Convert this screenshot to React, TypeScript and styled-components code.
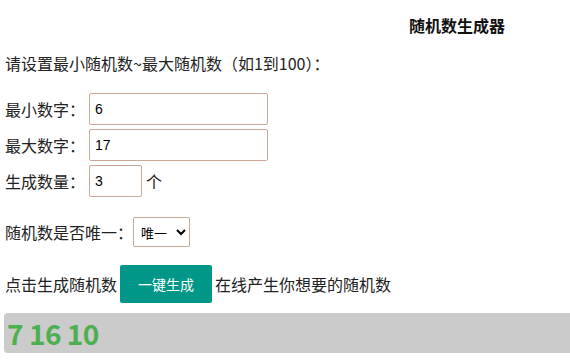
import styled, { createGlobalStyle } from "styled-components";

const GlobalStyle = createGlobalStyle`
  html, body {
    margin: 0;
    padding: 0;
    background: #fff;
  }
  body {
    font-family: "Noto Sans CJK SC", "Noto Sans", sans-serif;
    color: #222;
  }
`;

const Viewport = styled.div`
  width: 100%;
  overflow: hidden;
`;

const Page = styled.div`
  width: 914px;
  padding: 0 4px;
  box-sizing: border-box;
  font-size: 16px;
`;

const Title = styled.h3`
  margin: 0;
  padding-top: 14px;
  height: 22px;
  line-height: 22px;
  text-align: center;
  font-size: 16px;
  font-weight: bold;
  color: #111;
`;

const Intro = styled.p`
  margin: 15px 0 0;
  padding-left: 1px;
  line-height: 24px;
`;

const Fields = styled.div`
  display: flex;
  flex-direction: column;
  gap: 4px;
  margin-top: 18px;
`;

const Row = styled.div<{ $gap?: number; $top?: number }>`
  display: flex;
  align-items: center;
  gap: ${(p) => p.$gap ?? 4}px;
  margin-top: ${(p) => p.$top ?? 0}px;
  padding-left: 1px;
  line-height: 24px;
`;

const Label = styled.span`
  white-space: nowrap;
`;

const Input = styled.input<{ $w: number }>`
  width: ${(p) => p.$w}px;
  height: 32px;
  box-sizing: border-box;
  border: 1px solid #cba797;
  border-radius: 2px;
  padding: 0 5px;
  font-family: "Liberation Sans", Arial, sans-serif;
  font-size: 14px;
  color: #000;
  outline: none;
`;

const Select = styled.select`
  width: 57px;
  height: 30px;
  box-sizing: border-box;
  border: 1px solid #cba797;
  border-radius: 2px;
  padding: 0 0 0 3px;
  background: #fff;
  font-family: "Noto Sans CJK SC", sans-serif;
  font-size: 13px;
  color: #000;
`;

const Button = styled.button`
  height: 38px;
  padding: 0 18px;
  border: none;
  border-radius: 2px;
  background: #009688;
  color: #fff;
  font-family: "Noto Sans CJK SC", sans-serif;
  font-size: 14px;
  cursor: pointer;
`;

const Result = styled.div`
  margin-top: 10px;
  height: 40px;
  display: flex;
  align-items: center;
  padding-left: 3px;
  background: #cbcbcb;
  border-radius: 4px;
  font-size: 28px;
  font-weight: bold;
  color: #4caf50;
  letter-spacing: -0.5px;
`;

export default function App() {
  return (
    <Viewport>
      <GlobalStyle />
      <Page>
        <Title>随机数生成器</Title>
        <Intro>请设置最小随机数~最大随机数（如1到100）：</Intro>
        <Fields>
          <Row>
            <Label>最小数字：</Label>
            <Input $w={179} defaultValue="6" />
          </Row>
          <Row>
            <Label>最大数字：</Label>
            <Input $w={179} defaultValue="17" />
          </Row>
          <Row $gap={4}>
            <Label>生成数量：</Label>
            <Input $w={53} defaultValue="3" />
            <Label>个</Label>
          </Row>
        </Fields>
        <Row $gap={0} $top={20}>
          <Label>随机数是否唯一：</Label>
          <Select defaultValue="1">
            <option value="1">唯一</option>
            <option value="0">不唯一</option>
          </Select>
        </Row>
        <Row $gap={3} $top={18}>
          <Label>点击生成随机数</Label>
          <Button>一键生成</Button>
          <Label>在线产生你想要的随机数</Label>
        </Row>
        <Result>7 16 10</Result>
      </Page>
    </Viewport>
  );
}
